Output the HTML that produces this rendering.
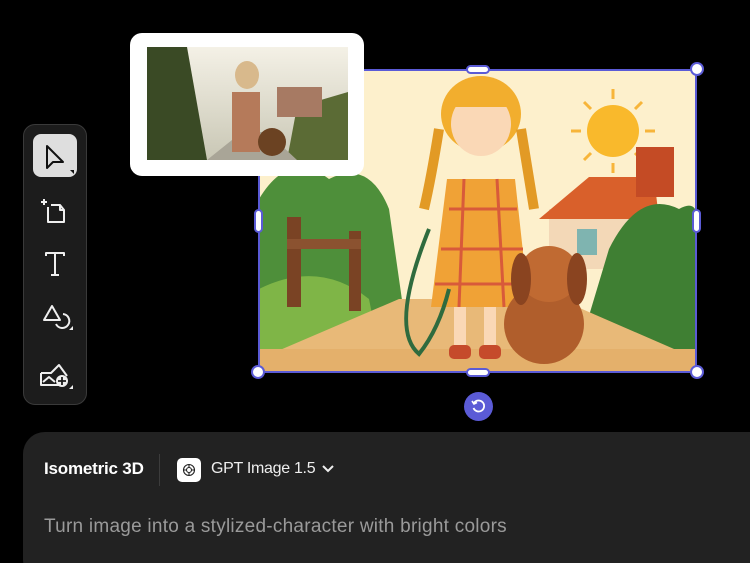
<!DOCTYPE html>
<html><head><style>
*{margin:0;padding:0;box-sizing:border-box}
html,body{width:750px;height:563px;background:#000;overflow:hidden}
body{position:relative;font-family:"Liberation Sans",sans-serif}
.abs{position:absolute}
</style></head><body>
<svg class="abs" style="left:259px;top:69px" width="438" height="304" viewBox="0 0 438 304">
<rect width="438" height="304" fill="#fdf0cc"/>
<circle cx="354" cy="62" r="26" fill="#f9b92c"/>
<g stroke="#f7b53a" stroke-width="3">
<line x1="354" y1="20" x2="354" y2="30"/><line x1="354" y1="94" x2="354" y2="104"/><line x1="312" y1="62" x2="322" y2="62"/><line x1="386" y1="62" x2="396" y2="62"/><line x1="325" y1="33" x2="332" y2="40"/><line x1="376" y1="84" x2="383" y2="91"/><line x1="383" y1="33" x2="376" y2="40"/><line x1="325" y1="91" x2="332" y2="84"/></g>
<rect x="290" y="140" width="90" height="60" fill="#f3d8b7"/>
<polygon points="280,150 330,108 395,108 400,150" fill="#d9602b"/>
<rect x="377" y="78" width="38" height="50" fill="#c44b25"/>
<rect x="318" y="160" width="20" height="26" fill="#7fb4b0"/>
<path d="M0 130 Q30 80 70 110 Q110 90 130 140 L150 280 L0 280Z" fill="#4e8f3a"/>
<path d="M320 280 L350 180 Q380 120 420 140 Q438 130 438 150 L438 280Z" fill="#3f7f33"/>
<path d="M0 220 Q60 190 110 230 L120 280 L0 280Z" fill="#7fb547"/>
<rect x="28" y="148" width="14" height="90" fill="#7a4324"/>
<rect x="90" y="162" width="12" height="80" fill="#7a4324"/>
<rect x="28" y="170" width="74" height="10" fill="#8b5230"/>
<path d="M0 290 L140 230 L300 230 L438 290 L438 304 L0 304Z" fill="#e8b978"/>
<rect x="0" y="280" width="438" height="24" fill="#e4b06b"/>
<ellipse cx="222" cy="45" rx="40" ry="38" fill="#f2ae2e"/>
<ellipse cx="222" cy="55" rx="30" ry="32" fill="#fad8b6"/>
<rect x="195" y="20" width="55" height="18" fill="#f2ae2e"/>
<path d="M180 60 Q172 110 165 140" stroke="#e29a25" stroke-width="10" fill="none"/>
<path d="M262 60 Q270 110 275 140" stroke="#e29a25" stroke-width="10" fill="none"/>
<path d="M188 110 L256 110 L270 238 L172 238Z" fill="#f0a236"/>
<g stroke="#d85a3a" stroke-width="3"><line x1="190" y1="140" x2="258" y2="140"/><line x1="182" y1="180" x2="264" y2="180"/><line x1="176" y1="215" x2="268" y2="215"/><line x1="205" y1="110" x2="200" y2="238"/><line x1="238" y1="110" x2="245" y2="238"/></g>
<rect x="195" y="238" width="12" height="42" fill="#fad8b6"/><rect x="225" y="238" width="12" height="42" fill="#fad8b6"/>
<rect x="190" y="276" width="22" height="14" rx="5" fill="#c54a2b"/><rect x="220" y="276" width="22" height="14" rx="5" fill="#c54a2b"/>
<path d="M170 160 Q130 260 160 285 Q180 260 190 220" stroke="#2f6b3e" stroke-width="4" fill="none"/>
<ellipse cx="285" cy="255" rx="40" ry="40" fill="#b05e2c"/>
<ellipse cx="290" cy="205" rx="30" ry="28" fill="#c06a32"/>
<ellipse cx="262" cy="210" rx="10" ry="26" fill="#8a4420"/>
<ellipse cx="318" cy="210" rx="10" ry="26" fill="#8a4420"/>
</svg>
<div class="abs" style="left:258px;top:69px;width:439px;height:304px;border:2px solid #5b5bd6"></div>
<div class="abs" style="left:251px;top:365px;width:14px;height:14px;border-radius:50%;background:#fff;border:2px solid #5b5bd6"></div>
<div class="abs" style="left:690px;top:365px;width:14px;height:14px;border-radius:50%;background:#fff;border:2px solid #5b5bd6"></div>
<div class="abs" style="left:690px;top:62px;width:14px;height:14px;border-radius:50%;background:#fff;border:2px solid #5b5bd6"></div>
<div class="abs" style="left:466px;top:65px;width:24px;height:9px;border-radius:5px;background:#fff;border:2px solid #5b5bd6"></div>
<div class="abs" style="left:466px;top:368px;width:24px;height:9px;border-radius:5px;background:#fff;border:2px solid #5b5bd6"></div>
<div class="abs" style="left:254px;top:209px;width:9px;height:24px;border-radius:5px;background:#fff;border:2px solid #5b5bd6"></div>
<div class="abs" style="left:692px;top:209px;width:9px;height:24px;border-radius:5px;background:#fff;border:2px solid #5b5bd6"></div>
<div class="abs" style="left:464px;top:392px;width:29px;height:29px;border-radius:50%;background:#5b5bd6"></div>
<svg class="abs" style="left:470px;top:398px" width="17" height="17" viewBox="0 0 17 17"><path d="M4 5 A5.5 5.5 0 1 1 3.5 10" stroke="#fff" stroke-width="1.8" fill="none"/><path d="M2 3 L4 6 L7 4.5" stroke="#fff" stroke-width="1.6" fill="none"/></svg>
<div class="abs" style="left:130px;top:33px;width:234px;height:143px;background:#fff;border-radius:12px"></div>
<svg class="abs" style="left:147px;top:47px" width="201" height="113" viewBox="0 0 201 113">
<defs><linearGradient id="g" x1="0" y1="0" x2="0" y2="1"><stop offset="0" stop-color="#f4f1e6"/><stop offset="1" stop-color="#c9c7b5"/></linearGradient></defs>
<rect width="201" height="113" fill="url(#g)"/>
<path d="M0 0 L40 0 L60 113 L0 113Z" fill="#3a4a25"/>
<path d="M150 60 L201 45 L201 113 L140 113Z" fill="#5b6b35"/>
<rect x="130" y="40" width="45" height="30" fill="#a77a63"/>
<path d="M60 113 L95 85 L120 85 L150 113Z" fill="#a9a597"/>
<ellipse cx="100" cy="28" rx="12" ry="14" fill="#d8b98c"/>
<rect x="85" y="45" width="28" height="60" fill="#b57a5a"/>
<ellipse cx="125" cy="95" rx="14" ry="14" fill="#6b4222"/>
</svg>
<div class="abs" style="left:23px;top:124px;width:64px;height:281px;background:#1c1c1c;border:1px solid #3a3a3a;border-radius:12px"></div>
<div class="abs" style="left:33px;top:134px;width:44px;height:43px;background:#dedede;border-radius:8px"></div>
<svg class="abs" style="left:23px;top:124px" width="64" height="281" viewBox="0 0 64 281" fill="none" stroke-linejoin="round">
<path d="M24 22 L24 44 L30 38 L40 38 Z" stroke="#111" stroke-width="2"/>
<path d="M47 46 L51 46 L51 50Z" fill="#111"/>
<g stroke="#eee" stroke-width="2">
<path d="M25 83 L25 98 L41 98 L41 86 L37 81 L28 81"/><path d="M37 81 L37 86 L41 86"/><path d="M18 78 L24 78 M21 75 L21 81"/>
<path d="M23 132 L23 129 L41 129 L41 132 M32 129 L32 151 M28 151 L36 151"/>
<path d="M29 182 L21 196 L37 196 Z"/><path d="M33 200 A7 7 0 1 0 40 190"/>
<path d="M18 249 L18 261 L36 261 M18 249 L28 249 L36 241 L44 252"/><path d="M20 258 L26 253 L32 258"/>
</g>
<circle cx="39" cy="257" r="6" fill="#eee"/><path d="M39 253 L39 261 M35 257 L43 257" stroke="#1c1c1c" stroke-width="1.8"/>
<path d="M46 206 L50 206 L50 202Z M46 265 L50 265 L50 261Z" fill="#eee"/>
</svg>
<div class="abs" style="left:23px;top:432px;width:760px;height:150px;background:#222;border-radius:22px"></div>
<div class="abs" style="left:44px;top:459px;color:#fff;font-size:17px;font-weight:bold;letter-spacing:-0.2px">Isometric 3D</div>
<div class="abs" style="left:159px;top:454px;width:1px;height:32px;background:#3c3c3c"></div>
<div class="abs" style="left:177px;top:458px;width:24px;height:24px;background:#fff;border-radius:5px"></div>
<svg class="abs" style="left:181px;top:462px" width="16" height="16" viewBox="0 0 16 16" fill="none" stroke="#222" stroke-width="1.1"><circle cx="8" cy="8" r="5.5"/><circle cx="8" cy="8" r="2.5"/><path d="M8 2.5 L8 5.5 M13 8 L10.5 8 M3 8 L5.5 8 M8 13.5 L8 10.5"/></svg>
<div class="abs" style="left:211px;top:460px;color:#eee;font-size:16px;letter-spacing:-0.3px">GPT Image 1.5</div>
<svg class="abs" style="left:321px;top:464px" width="14" height="10"><path d="M2 2 L7 7 L12 2" stroke="#eee" stroke-width="2" fill="none"/></svg>
<div class="abs" style="left:44px;top:516px;color:#9a9a9a;font-size:19px;letter-spacing:0.25px">Turn image into a stylized-character with bright colors</div>
</body></html>
